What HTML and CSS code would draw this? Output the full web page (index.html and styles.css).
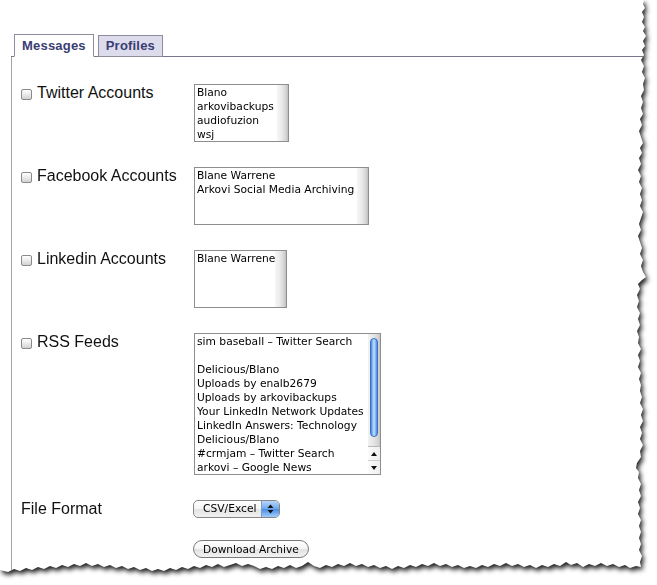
FILE: index.html
```html
<!DOCTYPE html>
<html>
<head>
<meta charset="utf-8">
<title>Archive</title>
<link rel="stylesheet" href="styles.css">
</head>
<body>
<div class="paper-wrap">
  <div class="paper">
    <div class="tabbar">
      <div class="tab active">Messages</div>
      <div class="tab">Profiles</div>
    </div>
    <div class="panel">
      <div class="form">
        <label class="field"><span class="cb"></span>Twitter Accounts</label>
        <div class="listbox lb-tw">
          <div class="opts">
            <div>Blano</div>
            <div>arkovibackups</div>
            <div>audiofuzion</div>
            <div>wsj</div>
          </div>
          <div class="track"></div>
        </div>

        <label class="field"><span class="cb"></span>Facebook Accounts</label>
        <div class="listbox lb-fb">
          <div class="opts">
            <div>Blane Warrene</div>
            <div>Arkovi Social Media Archiving</div>
          </div>
          <div class="track"></div>
        </div>

        <label class="field"><span class="cb"></span>Linkedin Accounts</label>
        <div class="listbox lb-li">
          <div class="opts">
            <div>Blane Warrene</div>
          </div>
          <div class="track"></div>
        </div>

        <label class="field"><span class="cb"></span>RSS Feeds</label>
        <div class="listbox lb-rss">
          <div class="opts">
            <div>sim baseball – Twitter Search</div>
            <div>&nbsp;</div>
            <div>Delicious/Blano</div>
            <div>Uploads by enalb2679</div>
            <div>Uploads by arkovibackups</div>
            <div>Your LinkedIn Network Updates</div>
            <div>LinkedIn Answers: Technology</div>
            <div>Delicious/Blano</div>
            <div>#crmjam – Twitter Search</div>
            <div>arkovi – Google News</div>
          </div>
          <div class="vscroll">
            <div class="thumb-area"><div class="thumb"></div></div>
            <div class="arrows">
              <div class="arrow"><svg width="6" height="4" viewBox="0 0 6 4"><polygon points="0,4 3,0 6,4" fill="#111"/></svg></div>
              <div class="arrow"><svg width="6" height="4" viewBox="0 0 6 4"><polygon points="0,0 6,0 3,4" fill="#111"/></svg></div>
            </div>
          </div>
        </div>

        <div class="field plain">File Format</div>
        <div class="popup">
          <span class="popup-text">CSV/Excel</span>
          <span class="popup-arrows"><svg width="7" height="10" viewBox="0 0 7 10"><polygon points="0.5,4 3.5,0.5 6.5,4" fill="#111"/><polygon points="0.5,6 6.5,6 3.5,9.5" fill="#111"/></svg></span>
        </div>

        <div class="spacer"></div>
        <button class="btn" type="button">Download Archive</button>
      </div>
    </div>
  </div>
</div>
</body>
</html>
```

FILE: styles.css
```css
html, body {
  margin: 0;
  background: #ffffff;
}
body {
  width: 657px;
  height: 585px;
  overflow: hidden;
}
.paper-wrap {
  filter: drop-shadow(2px 3px 2.5px rgba(0, 0, 0, 0.9));
}
.paper {
  width: 657px;
  height: 585px;
  box-sizing: border-box;
  padding-top: 34px;
  background: #ffffff;
  font-family: "Liberation Sans", Arial, sans-serif;
  clip-path: polygon(
    0px 0px, 644px 0px, 643px 4px, 645px 8px, 642px 12px, 644px 17px, 642px 22px, 645px 27px, 643px 31px, 646px 36px,
    643px 41px, 645px 46px, 642px 50px, 644px 55px, 641px 60px, 644px 66px, 642px 72px, 645px 78px, 643px 84px, 644px 90px,
    641px 96px, 643px 102px, 641px 108px, 643px 114px, 640px 119px, 642px 125px, 639px 131px, 641px 137px, 643px 143px, 640px 148px,
    642px 153px, 639px 158px, 641px 164px, 638px 170px, 641px 176px, 639px 182px, 642px 188px, 640px 194px, 642px 200px, 640px 206px,
    643px 212px, 641px 218px, 639px 224px, 641px 230px, 638px 236px, 640px 242px, 642px 248px, 640px 254px, 643px 260px, 641px 266px,
    643px 272px, 646px 277px, 642px 280px, 638px 284px, 640px 289px, 637px 295px, 639px 301px, 637px 307px, 640px 313px, 638px 319px,
    640px 325px, 637px 331px, 639px 337px, 638px 343px, 641px 349px, 638px 355px, 640px 361px, 638px 367px, 641px 373px, 639px 379px,
    641px 385px, 640px 391px, 642px 397px, 640px 403px, 643px 409px, 641px 415px, 643px 421px, 640px 427px, 642px 433px, 640px 439px,
    643px 445px, 640px 451px, 641px 457px, 637px 463px, 636px 468px, 639px 472px, 638px 478px, 641px 484px, 639px 490px, 641px 496px,
    638px 502px, 640px 508px, 638px 514px, 641px 520px, 639px 526px, 641px 532px, 639px 538px, 641px 544px, 639px 550px, 642px 556px,
    640px 562px, 641px 567px,
    636px 566px, 630px 568px, 625px 565px, 619px 567px, 613px 564px, 607px 566px, 601px 563px, 595px 566px, 589px 564px, 583px 567px,
    577px 563px, 571px 565px, 566px 562px, 560px 566px, 554px 564px, 548px 567px, 542px 565px, 536px 568px, 530px 565px, 524px 567px,
    518px 564px, 512px 566px, 506px 563px, 500px 566px, 494px 564px, 488px 567px, 482px 565px, 476px 568px, 470px 566px, 464px 568px,
    458px 565px, 452px 567px, 446px 564px, 440px 566px, 434px 563px, 428px 566px, 422px 564px, 416px 567px, 410px 565px, 404px 568px,
    398px 566px, 392px 569px, 386px 566px, 380px 568px, 374px 565px, 368px 567px, 362px 564px, 356px 566px, 350px 563px, 344px 566px,
    338px 564px, 332px 567px, 326px 565px, 320px 568px, 314px 566px, 308px 562px, 302px 566px, 296px 568px, 290px 565px, 284px 568px,
    278px 566px, 272px 569px, 266px 567px, 260px 569px, 254px 566px, 248px 564px, 242px 566px, 236px 563px, 230px 565px, 224px 567px,
    218px 564px, 212px 567px, 206px 565px, 200px 568px, 194px 566px, 188px 569px, 182px 567px, 176px 570px, 170px 568px, 164px 571px,
    158px 569px, 152px 571px, 146px 568px, 140px 570px, 134px 567px, 128px 569px, 122px 566px, 116px 568px, 110px 565px, 104px 567px,
    98px 564px, 92px 566px, 86px 563px, 80px 566px, 74px 564px, 68px 567px, 62px 565px, 56px 568px, 50px 566px, 44px 569px,
    38px 567px, 32px 570px, 26px 568px, 20px 571px, 14px 569px, 8px 572px, 0px 570px
  );
}

/* tabs */
.tabbar {
  display: flex;
  align-items: flex-end;
  gap: 4px;
  height: 22px;
  margin-left: 11px;
  padding-left: 3px;
  border-bottom: 1px solid #77748b;
}
.tab {
  margin-bottom: -1px;
  padding: 0 7px;
  border: 1px solid #8d8b9c;
  background: #dcdced;
  color: #3a3d72;
  font-size: 13px;
  font-weight: bold;
  letter-spacing: 0.2px;
  line-height: 20px;
}
.tab.active {
  background: #ffffff;
  border-bottom-color: #ffffff;
  line-height: 21px;
}

/* panel */
.panel {
  height: 528px;
  box-sizing: border-box;
  margin-left: 11px;
  padding: 27px 0 0 9px;
  border-left: 1px solid #a3a3a3;
}
.form {
  display: grid;
  grid-template-columns: 173px auto;
  row-gap: 25px;
  justify-items: start;
  align-items: start;
}
.field {
  display: flex;
  align-items: flex-start;
  gap: 5px;
  font-size: 16px;
  line-height: 18px;
  color: #111111;
}
.cb {
  flex: none;
  width: 11px;
  height: 11px;
  margin-top: 5px;
  box-sizing: border-box;
  border: 1px solid #8a8a8a;
  border-radius: 2px;
  background: linear-gradient(#ffffff, #e6e6e6 60%, #d2d2d2);
}

/* list boxes */
.listbox {
  display: flex;
  height: 58px;
  box-sizing: border-box;
  border: 1px solid #8e8e8e;
  background: #ffffff;
}
.lb-tw { width: 95px; }
.lb-fb { width: 175px; }
.lb-li { width: 93px; }
.lb-rss { width: 187px; height: 142px; }
.opts {
  flex: 1;
  min-width: 0;
  padding: 1px 0 0 2px;
  overflow: hidden;
  white-space: nowrap;
  font-family: "DejaVu Sans", sans-serif;
  font-size: 10.7px;
  line-height: 14px;
  color: #000000;
}
.track {
  flex: none;
  width: 11px;
  background: linear-gradient(to right, #f6f6f6, #ececec 40%, #d6d6d6 80%, #bebebe);
}
.vscroll {
  flex: none;
  width: 12px;
  display: flex;
  flex-direction: column;
  background: linear-gradient(to right, #f2f2f2, #e6e6e6 45%, #d4d4d4 85%, #c4c4c4);
}
.thumb-area {
  flex: 1;
  padding: 4px 2px 0 2px;
}
.thumb {
  height: 99px;
  box-sizing: border-box;
  border: 1px solid #3a6fc4;
  border-radius: 5px;
  background: linear-gradient(to right, #4a87dd, #8ec0f6 30%, #c2e0fd 50%, #8cbdf4 72%, #4b88de);
}
.arrows {
  flex: none;
  height: 27px;
  display: flex;
  flex-direction: column;
  border-top: 1px solid #b8b8b8;
  background: linear-gradient(to right, #fbfbfb, #eeeeee);
}
.arrow {
  flex: 1;
  display: flex;
  align-items: center;
  justify-content: center;
}
.arrow + .arrow {
  border-top: 1px solid #cfcfcf;
}

/* popup */
.popup {
  display: flex;
  width: 87px;
  height: 18px;
  margin-left: -1px;
  box-sizing: border-box;
  border: 1px solid #878787;
  border-radius: 5px;
  overflow: hidden;
  background: linear-gradient(#ffffff, #f4f4f4 50%, #e4e4e4 52%, #f0f0f0);
}
.popup-text {
  flex: 1;
  padding-left: 9px;
  font-family: "DejaVu Sans", sans-serif;
  font-size: 10.7px;
  line-height: 16px;
  color: #000000;
}
.popup-arrows {
  flex: none;
  width: 17px;
  display: flex;
  align-items: center;
  justify-content: center;
  border-left: 1px solid #7d9ccc;
  background: linear-gradient(#b6d6fa, #6ea7ec 50%, #4a8ee6 52%, #9fcdfc);
}

/* button */
.btn {
  margin: -3px 0 0 -1px;
  height: 18px;
  padding: 0 9px;
  border: 1px solid #7a7a7a;
  border-radius: 9px;
  background: linear-gradient(#ffffff, #f4f4f4 50%, #e2e2e2 52%, #f2f2f2);
  font-family: "DejaVu Sans", sans-serif;
  font-size: 10.6px;
  line-height: 16px;
  color: #000000;
}
.spacer {
  height: 1px;
}
```
